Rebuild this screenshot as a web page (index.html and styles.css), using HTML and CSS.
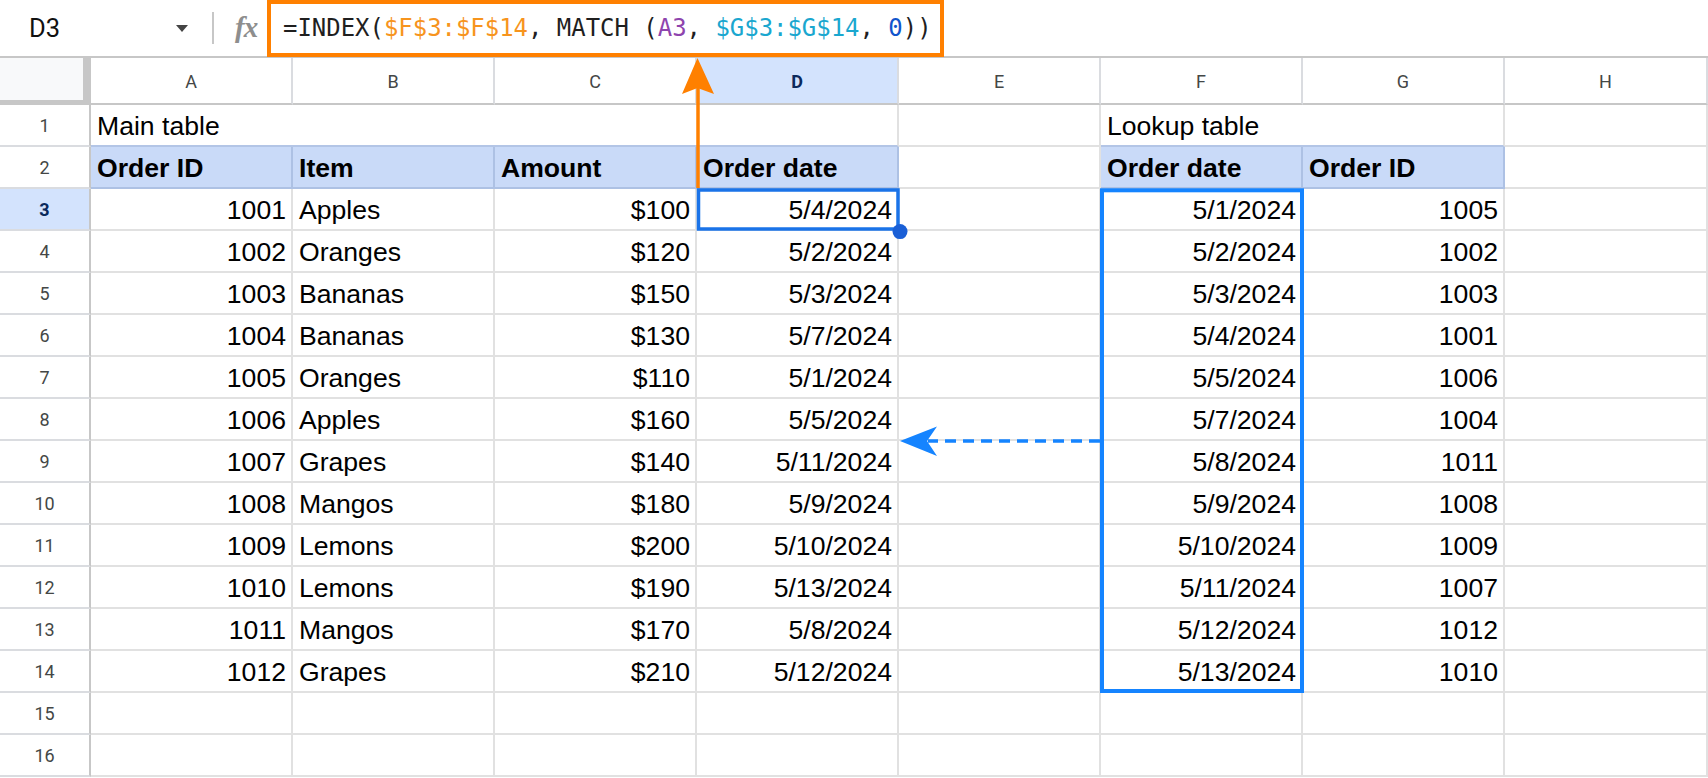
FILE: index.html
```html
<!DOCTYPE html>
<html lang="en">
<head>
<meta charset="utf-8">
<title>INDEX MATCH</title>
<link rel="stylesheet" href="styles.css">
</head>
<body>
<div class="app">
  <div class="toolbar">
    <div class="namebox"><span class="ref">D3</span><span class="caret"></span></div>
    <div class="divider"></div>
    <div class="fx">fx</div>
    <div class="formula"><span>=INDEX(</span><span class="f-or">$F$3:$F$14</span><span>, MATCH (</span><span class="f-pu">A3</span><span>, </span><span class="f-cy">$G$3:$G$14</span><span>, </span><span class="f-bl">0</span><span>))</span></div>
  </div>
  <div class="sheet">
    <div class="corner"></div>
    <div class="ch">A</div><div class="ch">B</div><div class="ch">C</div><div class="ch ch-sel">D</div><div class="ch">E</div><div class="ch">F</div><div class="ch">G</div><div class="ch">H</div>

    <div class="rh">1</div>
    <div class="c span4 above-hd">Main table</div><div class="c"></div><div class="c span2 above-hd">Lookup table</div><div class="c"></div>

    <div class="rh">2</div>
    <div class="c hd">Order ID</div><div class="c hd">Item</div><div class="c hd">Amount</div><div class="c hd">Order date</div><div class="c"></div><div class="c hd">Order date</div><div class="c hd">Order ID</div><div class="c"></div>

    <div class="rh rh-sel">3</div>
    <div class="c r">1001</div><div class="c">Apples</div><div class="c r">$100</div><div class="c r">5/4/2024</div><div class="c"></div><div class="c r">5/1/2024</div><div class="c r">1005</div><div class="c"></div>

    <div class="rh">4</div>
    <div class="c r">1002</div><div class="c">Oranges</div><div class="c r">$120</div><div class="c r">5/2/2024</div><div class="c"></div><div class="c r">5/2/2024</div><div class="c r">1002</div><div class="c"></div>

    <div class="rh">5</div>
    <div class="c r">1003</div><div class="c">Bananas</div><div class="c r">$150</div><div class="c r">5/3/2024</div><div class="c"></div><div class="c r">5/3/2024</div><div class="c r">1003</div><div class="c"></div>

    <div class="rh">6</div>
    <div class="c r">1004</div><div class="c">Bananas</div><div class="c r">$130</div><div class="c r">5/7/2024</div><div class="c"></div><div class="c r">5/4/2024</div><div class="c r">1001</div><div class="c"></div>

    <div class="rh">7</div>
    <div class="c r">1005</div><div class="c">Oranges</div><div class="c r">$110</div><div class="c r">5/1/2024</div><div class="c"></div><div class="c r">5/5/2024</div><div class="c r">1006</div><div class="c"></div>

    <div class="rh">8</div>
    <div class="c r">1006</div><div class="c">Apples</div><div class="c r">$160</div><div class="c r">5/5/2024</div><div class="c"></div><div class="c r">5/7/2024</div><div class="c r">1004</div><div class="c"></div>

    <div class="rh">9</div>
    <div class="c r">1007</div><div class="c">Grapes</div><div class="c r">$140</div><div class="c r">5/11/2024</div><div class="c"></div><div class="c r">5/8/2024</div><div class="c r">1011</div><div class="c"></div>

    <div class="rh">10</div>
    <div class="c r">1008</div><div class="c">Mangos</div><div class="c r">$180</div><div class="c r">5/9/2024</div><div class="c"></div><div class="c r">5/9/2024</div><div class="c r">1008</div><div class="c"></div>

    <div class="rh">11</div>
    <div class="c r">1009</div><div class="c">Lemons</div><div class="c r">$200</div><div class="c r">5/10/2024</div><div class="c"></div><div class="c r">5/10/2024</div><div class="c r">1009</div><div class="c"></div>

    <div class="rh">12</div>
    <div class="c r">1010</div><div class="c">Lemons</div><div class="c r">$190</div><div class="c r">5/13/2024</div><div class="c"></div><div class="c r">5/11/2024</div><div class="c r">1007</div><div class="c"></div>

    <div class="rh">13</div>
    <div class="c r">1011</div><div class="c">Mangos</div><div class="c r">$170</div><div class="c r">5/8/2024</div><div class="c"></div><div class="c r">5/12/2024</div><div class="c r">1012</div><div class="c"></div>

    <div class="rh">14</div>
    <div class="c r">1012</div><div class="c">Grapes</div><div class="c r">$210</div><div class="c r">5/12/2024</div><div class="c"></div><div class="c r">5/13/2024</div><div class="c r">1010</div><div class="c"></div>

    <div class="rh">15</div>
    <div class="c"></div><div class="c"></div><div class="c"></div><div class="c"></div><div class="c"></div><div class="c"></div><div class="c"></div><div class="c"></div>

    <div class="rh">16</div>
    <div class="c"></div><div class="c"></div><div class="c"></div><div class="c"></div><div class="c"></div><div class="c"></div><div class="c"></div><div class="c"></div>
  </div>

  <svg class="overlay" width="1708" height="778" viewBox="0 0 1708 778">
    <rect x="1102" y="190.3" width="200" height="500.7" fill="none" stroke="#1584ff" stroke-width="4"/>
    <line x1="1100" y1="441" x2="928" y2="441" stroke="#1584ff" stroke-width="3.5" stroke-dasharray="11 7"/>
    <polygon points="900,441 937,426.5 927,441 937,456" fill="#1584ff"/>
    <rect x="698.5" y="190" width="199.5" height="39" fill="none" stroke="#1a73e8" stroke-width="3.5"/>
    <circle cx="900" cy="231.6" r="7.5" fill="#1a5fd6"/>
    <line x1="698" y1="86" x2="698" y2="188" stroke="#ff8000" stroke-width="3.5"/>
    <polygon points="697.5,58 714,94 697.5,88 682,94" fill="#ff8000"/>
  </svg>
</div>
</body>
</html>
```
FILE: styles.css
```css
* { box-sizing: border-box; }

html, body {
  margin: 0;
  padding: 0;
  background: #ffffff;
}

.app {
  position: relative;
  width: 1708px;
  height: 778px;
  overflow: hidden;
  font-family: "Liberation Sans", Arial, sans-serif;
  color: #000;
}

/* ---------- formula bar ---------- */
.toolbar {
  display: flex;
  align-items: center;
  height: 58px;
  border-bottom: 2px solid #c7c7c7;
  background: #fff;
}

.namebox {
  display: flex;
  align-items: center;
  width: 196px;
  height: 56px;
  padding-left: 29px;
  padding-right: 8px;
  font-family: Roboto, "Liberation Sans", sans-serif;
  font-size: 25.5px;
  color: #111;
}

.namebox .ref { padding-bottom: 1px; }

.caret {
  margin-left: auto;
  width: 0;
  height: 0;
  border-left: 6px solid transparent;
  border-right: 6px solid transparent;
  border-top: 7px solid #444;
}

.divider {
  margin-left: 16px;
  width: 2px;
  height: 32px;
  background: #c7c7c7;
}

.fx {
  width: 53px;
  padding-left: 21px;
  font-family: "Liberation Serif", "DejaVu Serif", serif;
  font-style: italic;
  font-weight: bold;
  font-size: 29px;
  color: #8e8e8e;
  letter-spacing: -1px;
  padding-bottom: 2px;
}

.formula {
  position: relative;
  z-index: 2;
  align-self: flex-start;
  display: flex;
  align-items: center;
  width: 677px;
  height: 57px;
  border: 4px solid #ff8000;
  padding-left: 12px;
  padding-bottom: 2px;
  background: #fff;
  font-family: "DejaVu Sans Mono", "Liberation Mono", monospace;
  font-size: 23.95px;
  color: #1f1f1f;
  white-space: pre;
}

.f-or { color: #f7941d; }
.f-pu { color: #8e44ad; }
.f-cy { color: #1aa7cf; }
.f-bl { color: #1155cc; }

/* ---------- grid ---------- */
.sheet {
  display: grid;
  grid-template-columns: 91px repeat(7, 202px) 203px;
  grid-template-rows: 47px repeat(16, 42px);
}

.corner {
  background: #f8f9fa;
  border-right: 8px solid #c7c7c7;
  border-bottom: 5px solid #c7c7c7;
}

.ch {
  display: flex;
  align-items: center;
  justify-content: center;
  border-right: 2px solid #dadce0;
  border-bottom: 2px solid #c7c7c7;
  font-family: Roboto, "Liberation Sans", sans-serif;
  font-size: 18px;
  color: #444746;
  padding-top: 1px;
}

.ch-sel {
  background: #d3e3fd;
  color: #0b2a5c;
  font-weight: bold;
}

.rh {
  display: flex;
  align-items: center;
  justify-content: center;
  border-right: 2px solid #c7c7c7;
  border-bottom: 2px solid #dadce0;
  font-family: Roboto, "Liberation Sans", sans-serif;
  font-size: 18px;
  color: #444746;
}

.rh-sel {
  background: #d3e3fd;
  color: #0b2a5c;
  font-weight: bold;
}

.c {
  border-right: 2px solid #e1e1e1;
  border-bottom: 2px solid #e1e1e1;
  padding: 2px 5px 0 6px;
  font-size: 26.6px;
  line-height: 38px;
  white-space: nowrap;
  overflow: hidden;
}

.r { text-align: right; }

.span4 { grid-column: span 4; }
.span2 { grid-column: span 2; }

.above-hd { border-bottom-color: #b3c5e6; }

.hd {
  background: #c9daf8;
  font-weight: bold;
  border-right-color: #adc1e4;
  border-bottom-color: #adc1e4;
}

/* ---------- overlay annotations ---------- */
.overlay {
  position: absolute;
  left: 0;
  top: 0;
  pointer-events: none;
  z-index: 3;
}
```
